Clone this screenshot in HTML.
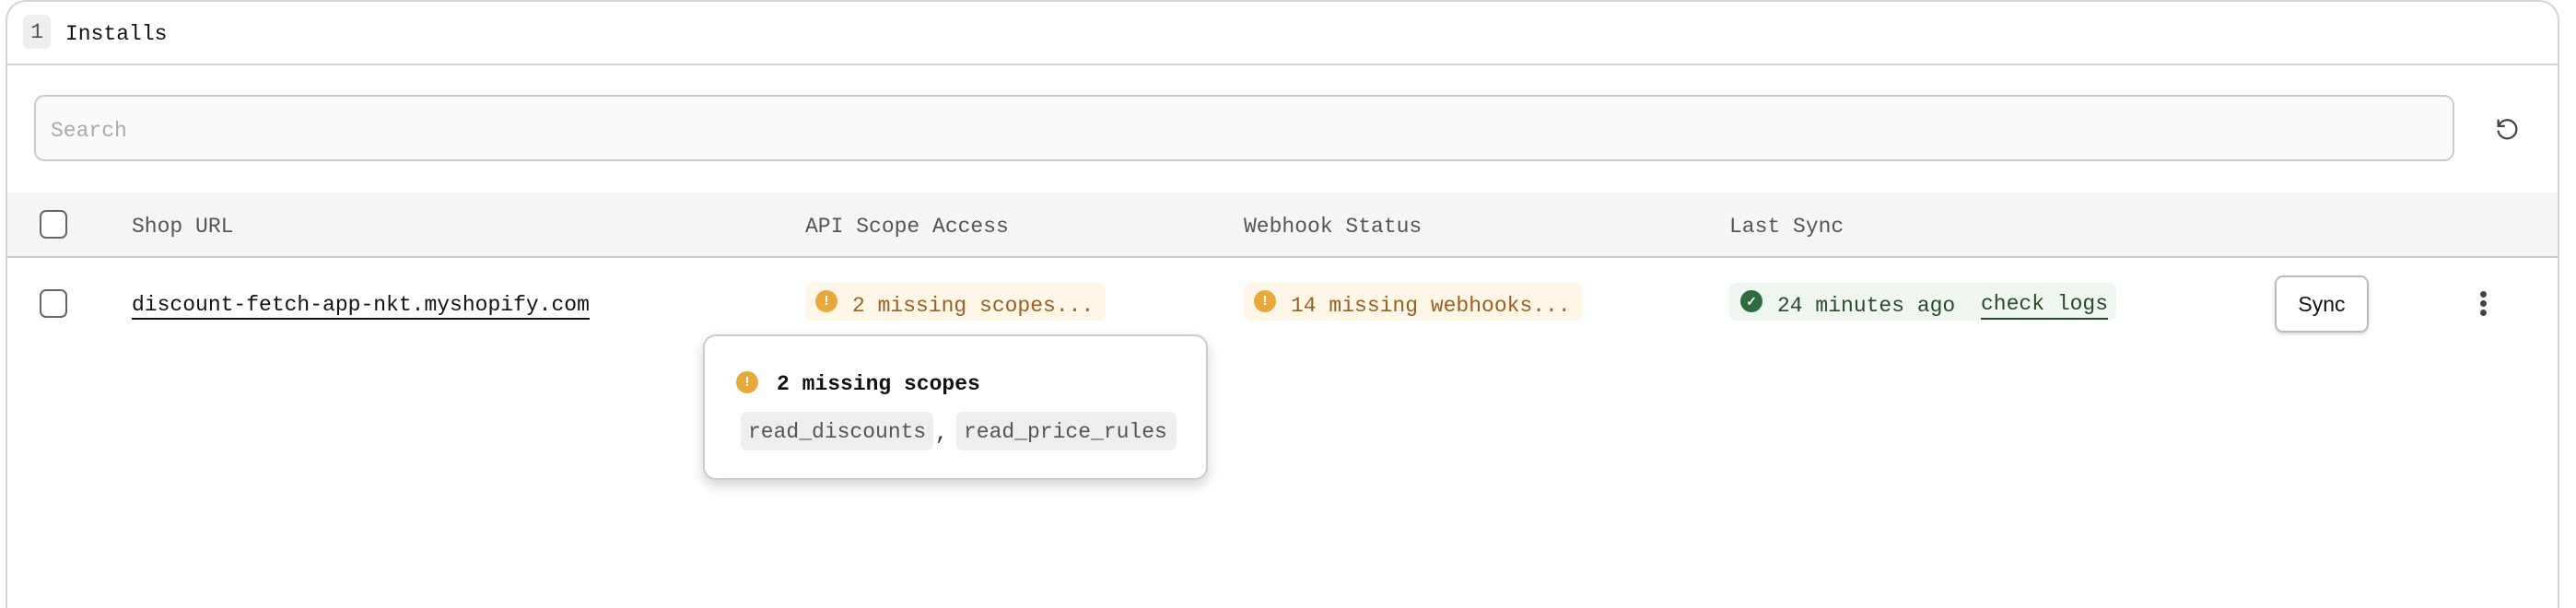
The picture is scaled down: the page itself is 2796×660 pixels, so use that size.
<!DOCTYPE html>
<html style="width:2796px;height:660px;overflow:hidden"><head><meta charset="utf-8"><style>
*{box-sizing:border-box;margin:0;padding:0}
body{width:2796px;height:660px;background:#fff;font-family:"Liberation Mono",monospace;font-size:23px;position:relative;overflow:hidden;color:#222}
.a{position:absolute;white-space:nowrap}
.t{margin-top:3px}
.card{position:absolute;left:6px;top:0;width:2772px;height:660px;border:2px solid #d4d4d4;border-bottom:none;border-radius:22px 22px 0 0}
.cb{position:absolute;width:30px;height:31px;border:2px solid #666;border-radius:7px;background:#fff}
.badge{position:absolute;height:41px;border-radius:8px;line-height:41px}
.ic{position:absolute;width:24px;height:24px;border-radius:50%;color:#fff;font:bold 15px/24px "Liberation Sans",sans-serif;text-align:center}
.chip{position:absolute;height:42px;background:#eee;border-radius:7px;line-height:44px;color:#555;padding:0 8px}
</style></head><body>
<div class="card"></div>
<div class="a" style="left:25px;top:16px;width:30px;height:37px;background:#eee;border-radius:6px;text-align:center;line-height:39px;color:#555">1</div>
<div class="a t" style="left:71px;top:21px;color:#111">Installs</div>
<div class="a" style="left:7px;top:69px;width:2771px;height:2px;background:#d4d4d4"></div>
<div class="a" style="left:37px;top:103px;width:2627px;height:72px;background:#fafafa;border:2px solid #ccc;border-radius:11px"></div>
<div class="a t" style="left:55px;top:126px;color:#aaa">Search</div>
<svg class="a" style="left:2706px;top:125px" width="30" height="30" viewBox="0 0 24 24" fill="none" stroke="#444" stroke-width="1.8" stroke-linecap="round"><path d="M5 9a8 8 0 1 1-.5 5"/><path d="M4.5 4.5V9.5H9.5"/></svg>
<div class="a" style="left:8px;top:209px;width:2768px;height:71px;background:#f5f5f5;border-bottom:2px solid #ccc"></div>
<div class="cb" style="left:43px;top:228px"></div>
<div class="a t" style="left:143px;top:230px;color:#555">Shop URL</div>
<div class="a t" style="left:874px;top:230px;color:#555">API Scope Access</div>
<div class="a t" style="left:1350px;top:230px;color:#555">Webhook Status</div>
<div class="a t" style="left:1877px;top:230px;color:#555">Last Sync</div>
<div class="cb" style="left:43px;top:314px"></div>
<div class="a" style="left:143px;top:317px;color:#111;border-bottom:2px solid #111;line-height:28px">discount-fetch-app-nkt.myshopify.com</div>
<div class="badge" style="left:875px;top:307px;width:325px;background:#fff6e8"></div>
<div class="ic" style="left:885px;top:315px;background:#e8a93c">!</div>
<div class="a t" style="left:925px;top:316px;color:#9a5f22">2 missing scopes...</div>
<div class="badge" style="left:1350px;top:307px;width:367px;background:#fff6e8"></div>
<div class="ic" style="left:1361px;top:315px;background:#e8a93c">!</div>
<div class="a t" style="left:1401px;top:316px;color:#9a5f22">14 missing webhooks...</div>
<div class="badge" style="left:1877px;top:307px;width:420px;background:#eef6ef"></div>
<div class="ic" style="left:1889px;top:315px;background:#2e6b3f;font-size:14px">✓</div>
<div class="a t" style="left:1929px;top:316px;color:#2a4a30">24 minutes ago</div>
<div class="a" style="left:2150px;top:316px;color:#2a4a30;border-bottom:2px solid #2a4a30;line-height:29px">check logs</div>
<div class="a" style="left:2469px;top:299px;width:102px;height:62px;border:2px solid #bbb;border-radius:9px;box-shadow:0 2px 3px rgba(0,0,0,.15);text-align:center;line-height:58px;color:#111;font-family:'Liberation Sans',sans-serif;font-size:23px">Sync</div>
<div class="a" style="left:2692px;top:316px;width:7px;height:7px;border-radius:50%;background:#444"></div>
<div class="a" style="left:2692px;top:326px;width:7px;height:7px;border-radius:50%;background:#444"></div>
<div class="a" style="left:2692px;top:336px;width:7px;height:7px;border-radius:50%;background:#444"></div>
<div class="a" style="left:763px;top:363px;width:548px;height:158px;background:#fff;border:2px solid #ccc;border-radius:14px;box-shadow:0 6px 14px rgba(0,0,0,.18)"></div>
<div class="ic" style="left:799px;top:403px;background:#e8a93c">!</div>
<div class="a t" style="left:843px;top:401px;color:#111;font-weight:bold">2 missing scopes</div>
<div class="chip" style="left:804px;top:447px;width:209px">read_discounts</div>
<div class="a" style="left:1015px;top:458px;color:#333">,</div>
<div class="chip" style="left:1038px;top:447px;width:239px">read_price_rules</div>
</body></html>
